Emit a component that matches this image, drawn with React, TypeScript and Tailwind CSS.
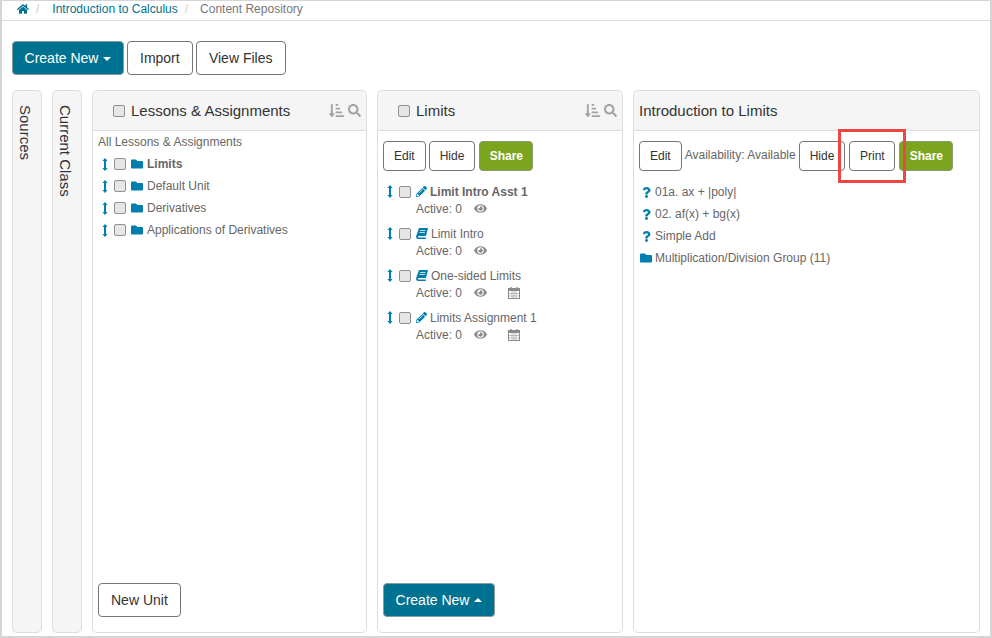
import { FaHome, FaFolder, FaPencilAlt, FaEye, FaQuestion, FaSearch, FaSortAmountDownAlt } from "react-icons/fa";

const btn =
  "inline-flex items-center justify-center rounded-[4px] border border-[#767676] bg-white text-[#333]";
const smallBtn = btn + " h-[30px] px-[10px] text-[12px]";
const bigBtn = btn + " h-[34px] px-[12px] text-[14px]";
const tealBtn =
  "inline-flex items-center justify-center h-[34px] w-[112px] rounded-[4px] border border-[#8a9aa0] bg-[#007291] text-[14px] text-white";
const share =
  "inline-flex items-center justify-center h-[30px] w-[54px] rounded-[4px] border border-[#8a9a70] bg-[#7da41f] text-[12px] font-bold text-white";

function Check() {
  return (
    <span className="block h-[12px] w-[12px] shrink-0 rounded-[2px] border border-[#8f8f8f] bg-[#e6e6e6]" />
  );
}

function Grip() {
  return (
    <svg viewBox="0 0 6 13" className="h-[13px] w-[12px] shrink-0 fill-[#007eb0]">
      <path d="M3 0 L5.6 3 L4 3 L4 10 L5.6 10 L3 13 L0.4 10 L2 10 L2 3 L0.4 3 Z" />
    </svg>
  );
}

function BookIcon() {
  return (
    <svg viewBox="0 0 12 11" className="ml-[5px] mr-[3px] h-[11px] w-[12px] shrink-0 fill-[#007eb0]">
      <path d="M3 0 H12 L10 8 H2.6 C1.8 8 1.6 9.4 2.6 9.4 H10 L9.7 11 H2 C0.4 11 -0.2 9.4 0.2 8 Z" />
      <path d="M4.2 2.2 H9.4 L9.2 3 H4 Z M3.7 4 H8.9 L8.7 4.8 H3.5 Z" fill="#fff" />
    </svg>
  );
}

function CalendarIcon() {
  return (
    <svg viewBox="0 0 12 12" className="ml-[21px] h-[12px] w-[12px] shrink-0">
      <rect x="0.5" y="1.5" width="11" height="10" fill="none" stroke="#8a8a8a" />
      <rect x="0.5" y="1.5" width="11" height="2.5" fill="#8a8a8a" />
      <path d="M3 0 V3 M9 0 V3" stroke="#8a8a8a" strokeWidth="1.4" />
      <path d="M4 4 V11 M6 4 V11 M8 4 V11 M1 6.5 H11 M1 9 H11" stroke="#a5a5a5" strokeWidth="0.7" />
    </svg>
  );
}

function SideTab({ label }: { label: string }) {
  return (
    <div className="w-[30px] shrink-0 rounded-[5px] border border-[#ddd] bg-[#f5f5f5] pt-[14px] pl-[2px] text-[15px] leading-[20px] text-[#333]">
      <span className="[writing-mode:vertical-rl]">{label}</span>
    </div>
  );
}

function PanelTools() {
  return (
    <div className="ml-auto flex items-center gap-[4px] text-[15px] text-[#a3a3a3]">
      <FaSortAmountDownAlt />
      <FaSearch className="text-[13px]" />
    </div>
  );
}

function UnitRow({ name, bold }: { name: string; bold?: boolean }) {
  return (
    <div className="flex h-[22px] items-center">
      <span className="ml-[1px] mr-[3px]">
        <Grip />
      </span>
      <Check />
      <FaFolder className="ml-[5px] mr-[4px] text-[12px] text-[#007eb0]" />
      <span className={bold ? "font-bold" : ""}>{name}</span>
    </div>
  );
}

function ItemRow({
  name,
  book,
  bold,
  calendar,
}: {
  name: string;
  book?: boolean;
  bold?: boolean;
  calendar?: boolean;
}) {
  return (
    <div className="h-[42px]">
      <div className="flex h-[17px] items-center">
        <span className="ml-[1px] mr-[3px]">
          <Grip />
        </span>
        <Check />
        {book ? (
          <BookIcon />
        ) : (
          <FaPencilAlt className="ml-[5px] mr-[3px] text-[11px] text-[#007eb0]" />
        )}
        <span className={bold ? "font-bold" : ""}>{name}</span>
      </div>
      <div className="flex h-[17px] items-center pl-[33px]">
        <span className="w-[58px]">Active: 0</span>
        <FaEye className="w-[13px] text-[13px] text-[#8a8a8a]" />
        {calendar && <CalendarIcon />}
      </div>
    </div>
  );
}

function QuestionRow({ name }: { name: string }) {
  return (
    <div className="flex h-[22px] items-center">
      <span className="flex w-[14px] justify-center">
        <FaQuestion className="text-[11px] text-[#007eb0]" />
      </span>
      <span className="ml-[2px]">{name}</span>
    </div>
  );
}

export default function App() {
  return (
    <div className="relative h-[638px] w-[992px] overflow-hidden border-x-2 border-t-[1px] border-b-2 border-[#d5d5d5] bg-white font-['Liberation_Sans',Arial,sans-serif]">
      <nav className="flex h-[20px] items-center border-b border-[#ddd] pb-[3px] pl-[15px] text-[12px] text-[#777]">
        <FaHome className="text-[12px] text-[#007291]" />
        <span className="mx-[7px] text-[#ccc]">/</span>
        <span className="ml-[6px] text-[#007291]">Introduction to Calculus</span>
        <span className="mx-[7px] text-[#ccc]">/</span>
        <span className="ml-[5px]">Content Repository</span>
      </nav>

      <div className="flex gap-[3px] pt-[20px] pl-[10px]">
        <button className={tealBtn}>
          Create New
          <span className="ml-[5px] mt-[1px] border-x-[4px] border-t-[4px] border-x-transparent border-t-white" />
        </button>
        <button className={bigBtn}>Import</button>
        <button className={bigBtn + " w-[90px] px-0"}>View Files</button>
      </div>

      <div className="mt-[15px] flex h-[543px] gap-[10px] pl-[10px]">
        <SideTab label="Sources" />
        <SideTab label="Current Class" />

        <section className="flex w-[275px] shrink-0 flex-col rounded-[5px] border border-[#ddd] text-[12px] text-[#666]">
          <header className="flex h-[40px] items-center rounded-t-[5px] border-b border-[#ddd] bg-[#f5f5f5] pr-[5px] pl-[20px]">
            <Check />
            <h2 className="ml-[6px] pt-[1px] text-[15px] text-[#333]">Lessons &amp; Assignments</h2>
            <PanelTools />
          </header>
          <div className="flex flex-1 flex-col pt-[3px] pr-[5px] pb-[15px] pl-[5px]">
            <div className="mb-[2px] h-[17px] leading-[17px]">All Lessons &amp; Assignments</div>
            <UnitRow name="Limits" bold />
            <UnitRow name="Default Unit" />
            <UnitRow name="Derivatives" />
            <UnitRow name="Applications of Derivatives" />
            <div className="mt-auto">
              <button className={bigBtn}>New Unit</button>
            </div>
          </div>
        </section>

        <section className="flex w-[246px] shrink-0 flex-col rounded-[5px] border border-[#ddd] text-[12px] text-[#666]">
          <header className="flex h-[40px] items-center rounded-t-[5px] border-b border-[#ddd] bg-[#f5f5f5] pr-[5px] pl-[20px]">
            <Check />
            <h2 className="ml-[6px] pt-[1px] text-[15px] text-[#333]">Limits</h2>
            <PanelTools />
          </header>
          <div className="flex flex-1 flex-col pt-[10px] pr-[5px] pb-[15px] pl-[5px]">
            <div className="mb-[12px] flex gap-[3px]">
              <button className={smallBtn}>Edit</button>
              <button className={smallBtn}>Hide</button>
              <button className={share + " ml-[1px]"}>Share</button>
            </div>
            <ItemRow name="Limit Intro Asst 1" bold />
            <ItemRow name="Limit Intro" book />
            <ItemRow name="One-sided Limits" book calendar />
            <ItemRow name="Limits Assignment 1" calendar />
            <div className="mt-auto">
              <button className={tealBtn}>
                Create New
                <span className="ml-[5px] mb-[1px] border-x-[4px] border-b-[4px] border-x-transparent border-b-white" />
              </button>
            </div>
          </div>
        </section>

        <section className="flex w-[347px] shrink-0 flex-col rounded-[5px] border border-[#ddd] text-[12px] text-[#666]">
          <header className="flex h-[40px] items-center rounded-t-[5px] border-b border-[#ddd] bg-[#f5f5f5] pl-[5px]">
            <h2 className="pt-[1px] text-[15px] text-[#333]">Introduction to Limits</h2>
          </header>
          <div className="flex flex-1 flex-col pt-[10px] pl-[5px]">
            <div className="mb-[10px] flex items-center">
              <button className={smallBtn}>Edit</button>
              <span className="mx-[3px] mb-[2px]">Availability: Available</span>
              <button className={smallBtn}>Hide</button>
              <button className={smallBtn + " ml-[4px] w-[46px] px-0"}>Print</button>
              <button className={share + " ml-[4px]"}>Share</button>
            </div>
            <QuestionRow name="01a. ax + |poly|" />
            <QuestionRow name="02. af(x) + bg(x)" />
            <QuestionRow name="Simple Add" />
            <div className="flex h-[22px] items-center">
              <FaFolder className="ml-[1px] mr-[3px] text-[12px] text-[#007eb0]" />
              <span>Multiplication/Division Group (11)</span>
            </div>
          </div>
        </section>
      </div>

      <div className="absolute top-[128px] left-[836px] h-[54px] w-[68px] border-[3px] border-[#f04545]" />
    </div>
  );
}
